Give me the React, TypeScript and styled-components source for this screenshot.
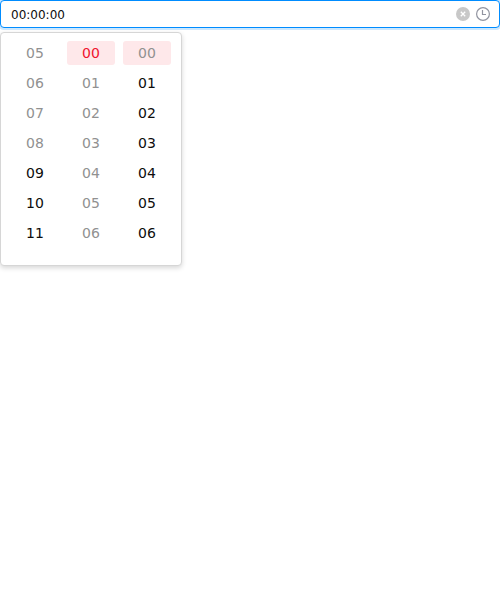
import React from "react";
import styled, { createGlobalStyle } from "styled-components";

const GlobalStyle = createGlobalStyle`
  *, *::before, *::after { box-sizing: border-box; }
  body { margin: 0; min-height: 100vh; background: #fff; font-family: "DejaVu Sans", sans-serif; }
`;

const Page = styled.main`
  min-height: 100vh;
`;

const Field = styled.div`
  display: flex;
  align-items: center;
  height: 28px;
  padding: 0 9px 0 10px;
  border: 1px solid #008cff;
  border-radius: 4px;
  box-shadow: 0 0 0 2px rgba(0, 140, 255, 0.2);
  background: #fff;
`;

const Value = styled.span`
  flex: 1;
  padding-top: 2px;
  font-size: 12px;
  line-height: 18px;
  color: #0d0d0d;
`;

const Icons = styled.div`
  display: flex;
  align-items: center;
  gap: 6px;
`;

const Icon = styled.svg`
  display: block;
  width: 14px;
  height: 14px;
`;

const Panel = styled.div`
  display: flex;
  gap: 8px;
  width: 182px;
  height: 234px;
  margin-top: 4px;
  padding: 8px 10px;
  border: 1px solid #d6d6d6;
  border-radius: 4px;
  box-shadow: 0 2px 5px rgba(0, 0, 0, 0.16);
  background: #fff;
`;

const Column = styled.div`
  display: flex;
  flex-direction: column;
  gap: 6px;
  width: 48px;
`;

const Cell = styled.div<{ $muted?: boolean; $selected?: boolean; $accent?: boolean }>`
  height: 24px;
  border-radius: 3px;
  font-size: 14px;
  line-height: 24px;
  text-align: center;
  color: ${(p) => (p.$accent ? "#f0142f" : p.$muted ? "#919191" : "#0d0d0d")};
  background: ${(p) => (p.$selected ? "#fee8ea" : "transparent")};
`;

const hours = ["05", "06", "07", "08", "09", "10", "11"];
const sixty = ["00", "01", "02", "03", "04", "05", "06"];

export default function App() {
  return (
    <Page>
      <GlobalStyle />
      <Field>
        <Value>00:00:00</Value>
        <Icons>
          <Icon viewBox="0 0 14 14">
            <circle cx="7" cy="7" r="7" fill="#c8c8c8" />
            <path d="M4.8 4.8L9.2 9.2M9.2 4.8L4.8 9.2" stroke="#fff" strokeWidth="1.3" />
          </Icon>
          <Icon viewBox="0 0 14 14" fill="none" stroke="#9194a0" strokeWidth="1.2">
            <circle cx="7" cy="7" r="6.4" />
            <path d="M6.5 3V7.5H10" />
          </Icon>
        </Icons>
      </Field>
      <Panel>
        <Column>
          {hours.map((v) => (
            <Cell key={v} $muted={Number(v) < 9}>{v}</Cell>
          ))}
        </Column>
        <Column>
          {sixty.map((v, i) => (
            <Cell key={v} $muted $selected={i === 0} $accent={i === 0}>{v}</Cell>
          ))}
        </Column>
        <Column>
          {sixty.map((v, i) => (
            <Cell key={v} $muted={i === 0} $selected={i === 0}>{v}</Cell>
          ))}
        </Column>
      </Panel>
    </Page>
  );
}
